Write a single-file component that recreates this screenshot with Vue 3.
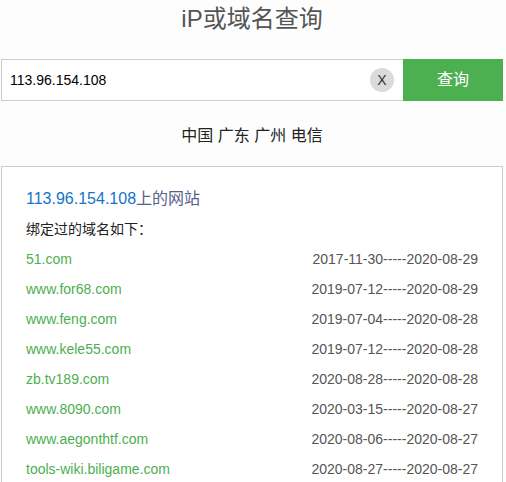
<script setup>
import { ref } from 'vue'

const query = ref('113.96.154.108')
const host = '113.96.154.108'

const records = [
  { domain: '51.com', from: '2017-11-30', to: '2020-08-29' },
  { domain: 'www.for68.com', from: '2019-07-12', to: '2020-08-29' },
  { domain: 'www.feng.com', from: '2019-07-04', to: '2020-08-28' },
  { domain: 'www.kele55.com', from: '2019-07-12', to: '2020-08-28' },
  { domain: 'zb.tv189.com', from: '2020-08-28', to: '2020-08-28' },
  { domain: 'www.8090.com', from: '2020-03-15', to: '2020-08-27' },
  { domain: 'www.aegonthtf.com', from: '2020-08-06', to: '2020-08-27' },
  { domain: 'tools-wiki.biligame.com', from: '2020-08-27', to: '2020-08-27' },
]
</script>

<template>
  <main class="page">
    <h1 class="title"><label for="query">iP或域名查询</label></h1>

    <form class="search" @submit.prevent>
      <div class="field">
        <input id="query" v-model="query" class="input" type="text" />
        <button class="clear" type="button" @click="query = ''">X</button>
      </div>
      <button class="submit" type="submit">查询</button>
    </form>

    <p class="location">中国 广东 广州 电信</p>

    <section class="panel">
      <h2 class="heading"><span class="host">{{ host }}</span>上的网站</h2>
      <p class="caption">绑定过的域名如下：</p>
      <table class="records">
        <tbody>
          <tr v-for="item in records" :key="item.domain">
            <td><a class="domain" href="#">{{ item.domain }}</a></td>
            <td class="dates">{{ item.from }}-----{{ item.to }}</td>
          </tr>
        </tbody>
      </table>
    </section>
  </main>
</template>

<style>
body {
  margin: 0;
  background: #fdfdfd;
}
</style>

<style scoped>
.page {
  padding: 0 3px 0 1px;
  font-family: "Liberation Sans", Arial, "Noto Sans CJK SC", sans-serif;
  font-size: 14px;
  line-height: 30px;
  color: #222;
}

.title {
  margin: 0;
  padding-bottom: 21px;
  font-size: 24px;
  font-weight: 400;
  line-height: 38px;
  text-align: center;
  color: #555;
}

.search {
  display: flex;
  height: 42px;
}

.field {
  display: flex;
  flex: 1;
  align-items: center;
  min-width: 0;
  padding-right: 9px;
  border: 1px solid #ccc;
  border-right: 0;
  background: #fff;
}

.input {
  flex: 1;
  min-width: 0;
  height: 40px;
  padding: 0 8px;
  border: 0;
  outline: 0;
  background: transparent;
  font: inherit;
  color: #000;
}

.clear {
  width: 24px;
  height: 24px;
  padding: 0;
  border: 0;
  border-radius: 50%;
  background: #dbdbdb;
  font: inherit;
  line-height: 24px;
  color: #333;
}

.submit {
  width: 100px;
  padding: 0;
  border: 0;
  background: #4caf50;
  font: inherit;
  font-size: 16px;
  color: #fff;
}

.location {
  margin: 0;
  padding: 20px 0 15px;
  font-size: 16px;
  text-align: center;
}

.panel {
  padding: 17px 24px;
  border: 1px solid #ccc;
  background: #fff;
}

.heading {
  margin: 0;
  font-size: 16px;
  font-weight: 400;
  color: #566389;
}

.host {
  color: #1673c7;
}

.caption {
  margin: 0;
}

.records {
  width: 100%;
  border-collapse: collapse;
}

.records td {
  height: 30px;
  padding: 0;
}

.domain {
  color: #4caf50;
  text-decoration: none;
}

.records .dates {
  text-align: right;
  color: #555;
}
</style>
